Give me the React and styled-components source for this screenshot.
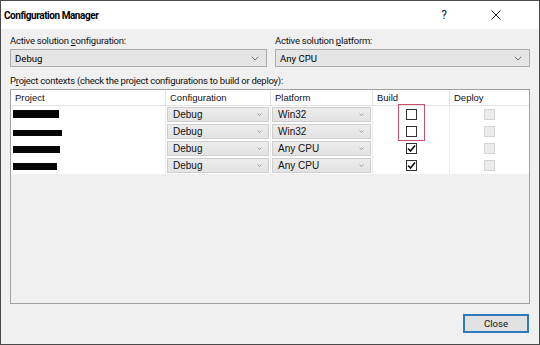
import styled, { createGlobalStyle } from "styled-components"

const GlobalStyle = createGlobalStyle`
  html, body { margin: 0; padding: 0; background: #f0f0f0; }
`

const rows = [
  { name: 46, top: 4, h: 8, config: "Debug", platform: "Win32", build: false },
  { name: 49, top: 7, h: 6, config: "Debug", platform: "Win32", build: false },
  { name: 47, top: 6, h: 7, config: "Debug", platform: "Any CPU", build: true },
  { name: 44, top: 6, h: 7, config: "Debug", platform: "Any CPU", build: true },
]

const Chevron = ({ size = 7 }) => (
  <svg width={size} height={size * 0.6} viewBox="0 0 10 6">
    <path d="M1 1 L5 5 L9 1" fill="none" stroke="#6d6d6d" strokeWidth="1.2" />
  </svg>
)

const Check = () => (
  <svg width="9" height="9" viewBox="0 0 9 9">
    <path d="M1 4.5 L3.5 7 L8 1.5" fill="none" stroke="#111" strokeWidth="1.6" />
  </svg>
)

const App = () => {
  return <Window>
    <GlobalStyle />
    <TitleBar>
      <Title>Configuration Manager</Title>
      <TitleButton>?</TitleButton>
      <TitleButton>
        <svg width="10" height="10" viewBox="0 0 10 10">
          <path d="M0.5 0.5 L9.5 9.5 M9.5 0.5 L0.5 9.5" stroke="#222" strokeWidth="1" />
        </svg>
      </TitleButton>
    </TitleBar>

    <Body>
      <TopRow>
        <Field>
          <Label>Active solution <u>c</u>onfiguration:</Label>
          <Combo>Debug<Chevron size={8} /></Combo>
        </Field>
        <Field>
          <Label>Active solution <u>p</u>latform:</Label>
          <Combo>Any CPU<Chevron size={8} /></Combo>
        </Field>
      </TopRow>

      <Label className="contexts">P<u>r</u>oject contexts (check the project configurations to build or deploy):</Label>

      <Panel>
        <Grid>
          <HeadCell>Project</HeadCell>
          <HeadCell>Configuration</HeadCell>
          <HeadCell>Platform</HeadCell>
          <HeadCell>Build</HeadCell>
          <HeadCell $last>Deploy</HeadCell>

          {rows.map((r, i) => (
            <Row key={i}>
              <Cell $top>
                <Redacted style={{ width: r.name, height: r.h, marginTop: r.top }} />
              </Cell>
              <Cell><CellCombo>{r.config}<Chevron size={5} /></CellCombo></Cell>
              <Cell><CellCombo>{r.platform}<Chevron size={5} /></CellCombo></Cell>
              <Cell $center>
                <Box $highlight={i < 2} $first={i === 0} $second={i === 1}>
                  {r.build && <Check />}
                </Box>
              </Cell>
              <Cell $center $last><Box $disabled /></Cell>
            </Row>
          ))}
        </Grid>
      </Panel>

      <Footer>
        <CloseButton>Close</CloseButton>
      </Footer>
    </Body>
  </Window>
}

export default App

const Window = styled.div`
  width: 540px;
  height: 345px;
  box-sizing: border-box;
  border: 1px solid #4a4a4a;
  display: flex;
  flex-direction: column;
  font-family: Roboto, "Noto Sans", sans-serif;
  color: #000;
  overflow: hidden;
`

const TitleBar = styled.div`
  height: 28px;
  background: #fff;
  display: flex;
  align-items: center;
  padding: 0 17px 0 3px;
`

const Title = styled.div`
  flex: 1;
  font-size: 10px;
  font-weight: 700;
  letter-spacing: -0.45px;
`

const TitleButton = styled.div`
  width: 52px;
  display: flex;
  justify-content: center;
  font-size: 12px;
  color: #222;
`

const Body = styled.div`
  flex: 1;
  background: #f0f0f0;
  display: flex;
  flex-direction: column;
  padding: 5px 9px 0 9px;

  .contexts {
    margin-top: 7px;
  }
`

const TopRow = styled.div`
  display: grid;
  grid-template-columns: 257px 1fr;
  gap: 8px;
`

const Field = styled.div`
  display: flex;
  flex-direction: column;
  gap: 1px;
`

const Label = styled.div`
  font-size: 9.5px;
  line-height: 14px;
  letter-spacing: -0.25px;
  color: #111;

  u { text-decoration: underline; text-underline-offset: 1px; }
`

const Combo = styled.div`
  height: 18px;
  box-sizing: border-box;
  border: 1px solid #adadad;
  background: #e5e5e5;
  display: flex;
  align-items: center;
  justify-content: space-between;
  padding: 0 7px 0 4px;
  font-size: 9.6px;
`

const Panel = styled.div`
  margin-top: 1px;
  height: 215px;
  box-sizing: border-box;
  border: 1px solid #a0a0a0;
  background: #f0f0f0;
`

const Grid = styled.div`
  display: grid;
  grid-template-columns: 155px 105px 102px 77px 1fr;
  background: #fff;
  font-family: "Liberation Sans", Arial, sans-serif;
  font-size: 9.5px;
  color: #111;
`

const Row = styled.div`
  display: contents;
`

const HeadCell = styled.div`
  height: 15px;
  display: flex;
  align-items: center;
  padding-left: 4px;
  border-right: ${p => p.$last ? "none" : "1px solid #e2e2e2"};
  border-bottom: 1px solid #e2e2e2;
`

const Cell = styled.div`
  height: 17px;
  display: flex;
  align-items: ${p => p.$top ? "flex-start" : "center"};
  justify-content: ${p => p.$center ? "center" : "flex-start"};
  padding: 0 1px;
  border-right: ${p => p.$last ? "none" : "1px solid #ececec"};
  position: relative;
`

const Redacted = styled.span`
  display: inline-block;
  margin-left: 1px;
  background: #050505;
`

const CellCombo = styled.div`
  flex: 1;
  height: 15px;
  box-sizing: border-box;
  border: 1px solid #cfcfcf;
  background: linear-gradient(#ececec, #e3e3e3);
  display: flex;
  align-items: center;
  justify-content: space-between;
  padding: 0 6px 0 5px;
  font-size: 10px;
`

const Box = styled.div`
  width: 11px;
  height: 11px;
  box-sizing: border-box;
  border: 1px solid ${p => p.$disabled ? "#d4d4d4" : "#333"};
  background: ${p => p.$disabled ? "#ececec" : "#fff"};
  display: flex;
  align-items: center;
  justify-content: center;

  ${p => p.$highlight && `
    &::after {
      content: "";
      position: absolute;
      left: 25px;
      width: 25px;
      border: 1px solid #c8506b;
      top: ${p.$first ? "-2px" : "-1px"};
      bottom: -1px;
      border-top: ${p.$first ? "1px solid #c8506b" : "none"};
      border-bottom: ${p.$second ? "1px solid #c8506b" : "none"};
    }
  `}
`

const Footer = styled.div`
  flex: 1;
  display: flex;
  justify-content: flex-end;
  align-items: flex-start;
  padding-top: 10px;
`

const CloseButton = styled.button`
  width: 66px;
  height: 19px;
  margin-right: 1px;
  border: 1px solid #2f7bbf;
  box-shadow: inset 0 0 0 1px #2f7bbf;
  background: #e1e1e1;
  font-family: Roboto, "Noto Sans", sans-serif;
  font-size: 9.6px;
  padding: 0;
  color: #111;
`
